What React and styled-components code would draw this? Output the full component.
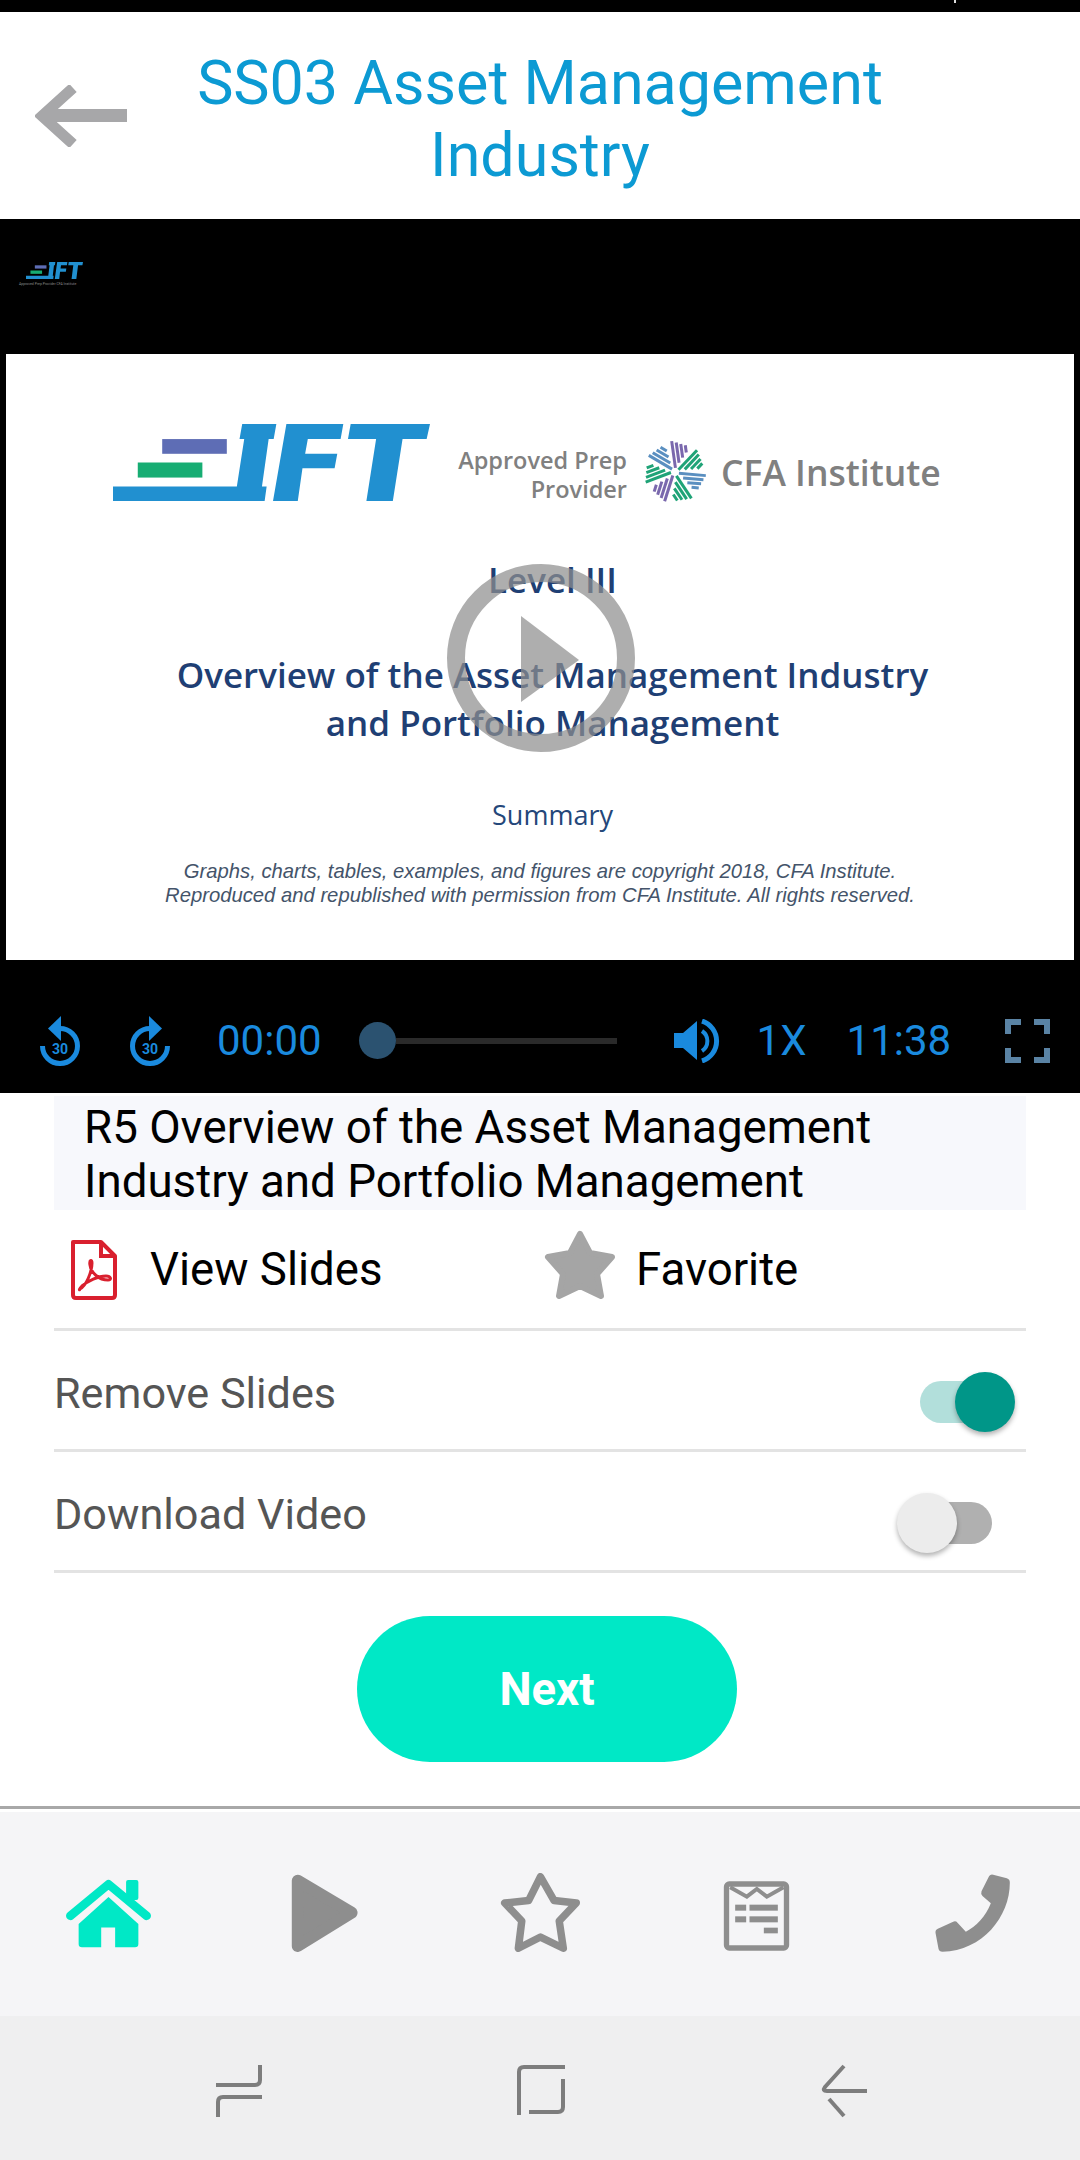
import React from 'react';
import styled, { createGlobalStyle } from 'styled-components';

const GlobalStyle = createGlobalStyle`
  html, body {
    margin: 0;
    padding: 0;
    background: #fff;
  }
  * {
    box-sizing: border-box;
  }
`;

const Screen = styled.div`
  width: 1080px;
  height: 2160px;
  overflow: hidden;
  display: flex;
  flex-direction: column;
  background: #fff;
  font-family: Roboto, "Liberation Sans", sans-serif;
`;

const StatusBar = styled.div`
  height: 12px;
  flex: none;
  background: #000;
  padding-left: 954px;
`;

const StatusTick = styled.div`
  width: 2px;
  height: 3px;
  background: #ddd;
`;

const Header = styled.header`
  height: 207px;
  flex: none;
  display: flex;
  align-items: center;
  padding-left: 35px;
`;

const HeaderTitle = styled.h1`
  margin: 6px 0 0 36px;
  width: 754px;
  font-size: 61px;
  font-weight: 400;
  line-height: 72px;
  text-align: center;
  color: #0c9ad3;
`;

const Video = styled.section`
  height: 874px;
  flex: none;
  background: #000;
  display: flex;
  flex-direction: column;
`;

const WatermarkLogo = styled.div`
  height: 135px;
  flex: none;
  padding: 43px 0 0 19px;
`;

const WatermarkMark = styled.div`
  padding-left: 7px;
  line-height: 0;
`;

const WatermarkText = styled.div`
  margin-top: 2px;
  font-size: 3.5px;
  line-height: 6px;
  color: #8a8a8a;
  white-space: nowrap;
`;

const Slide = styled.div`
  position: relative;
  height: 606px;
  flex: none;
  margin: 0 6px;
  background: #fff;
  display: flex;
  flex-direction: column;
  align-items: center;
`;

const LogoRow = styled.div`
  align-self: stretch;
  display: flex;
  align-items: flex-end;
  padding: 70px 0 0 107px;
`;

const PartnerGroup = styled.div`
  display: flex;
  align-items: center;
  margin-bottom: -4px;
`;

const ApprovedText = styled.div`
  width: 197px;
  padding-top: 5px;
  font-family: "Open Sans", sans-serif;
  font-size: 23.500px;
  font-weight: 600;
  line-height: 29px;
  text-align: right;
  color: #808080;
`;

const EmblemIcon = styled.svg`
  margin-left: 15px;
  flex: none;
`;

const CfaText = styled.div`
  margin-left: 13px;
  font-family: "Open Sans", sans-serif;
  font-size: 35.500px;
  font-weight: 600;
  line-height: 40px;
  color: #808080;
  white-space: nowrap;
`;

const SlideHeading = styled.div`
  margin-top: ${({ $top }) => $top}px;
  padding-left: 25px;
  font-family: "Open Sans", sans-serif;
  font-size: 35px;
  font-weight: 600;
  line-height: 48px;
  text-align: center;
  white-space: nowrap;
  color: #1f3f74;
`;

const SlideSummary = styled.div`
  margin-top: 51px;
  padding-left: 25px;
  font-family: "Open Sans", sans-serif;
  font-size: 27px;
  line-height: 34px;
  color: #24477a;
`;

const SlideNote = styled.div`
  margin-top: 27px;
  font-family: "Liberation Sans", Arial, sans-serif;
  font-size: 20.250px;
  font-style: italic;
  line-height: 24px;
  text-align: center;
  white-space: nowrap;
  color: #44546a;
`;

const PlayOverlay = styled.svg`
  position: absolute;
  left: 441px;
  top: 210px;
  width: 188px;
  height: 188px;
`;

const Controls = styled.div`
  height: 133px;
  flex: none;
  display: flex;
  align-items: center;
  padding: 28px 0 0 40px;
  color: #1a8ade;
`;

const ControlSlot = styled.div`
  flex: none;
  display: flex;
  align-items: center;
  margin-left: ${({ $left }) => $left || 0}px;
`;

const ControlText = styled.span`
  font-size: 42px;
  line-height: 48px;
  white-space: nowrap;
`;

const Seek = styled.div`
  width: 258px;
  display: flex;
  align-items: center;
`;

const SeekThumb = styled.div`
  width: 37px;
  height: 37px;
  flex: none;
  border-radius: 50%;
  background: #2b5270;
`;

const SeekTrack = styled.div`
  flex: 1;
  height: 6px;
  background: #2a2a2a;
`;

const Lesson = styled.main`
  flex: 1;
  display: flex;
  flex-direction: column;
  margin: 0 54px;
`;

const LessonTitle = styled.div`
  margin-top: 3px;
  height: 114px;
  flex: none;
  padding: 5px 0 0 30px;
  background: #f7f8fc;
  font-size: 45.700px;
  line-height: 54px;
  white-space: nowrap;
  color: #000;
`;

const ActionRow = styled.div`
  height: 121px;
  flex: none;
  display: flex;
  align-items: center;
  border-bottom: 3px solid #e3e3e3;
`;

const Action = styled.div`
  width: ${({ $width }) => $width}px;
  padding-left: ${({ $pad }) => $pad}px;
  display: flex;
  align-items: center;
  gap: ${({ $gap }) => $gap}px;
  font-size: 45.600px;
  line-height: 54px;
  padding-top: 2px;
  color: #000;
`;

const StarIcon = styled.svg`
  flex: none;
  margin-top: -10px;
`;

const SettingRow = styled.div`
  height: 121px;
  flex: none;
  display: flex;
  align-items: center;
  justify-content: space-between;
  border-bottom: 3px solid #e3e3e3;
`;

const SettingLabel = styled.span`
  margin-top: 7px;
  font-size: 43.200px;
  color: #555;
`;

const Toggle = styled.div`
  position: relative;
  width: 95px;
  height: 60px;
  margin: 24px ${({ $on }) => ($on ? 11 : 34)}px 0 0;
`;

const ToggleTrack = styled.div`
  position: absolute;
  top: 9px;
  bottom: 9px;
  ${({ $on }) => ($on ? 'left: 0; right: 20px;' : 'left: 20px; right: 0;')}
  border-radius: 21px;
  background: ${({ $on }) => ($on ? '#b2dfdb' : '#b0b0b0')};
`;

const ToggleThumb = styled.div`
  position: absolute;
  top: 0;
  ${({ $on }) => ($on ? 'right: 0;' : 'left: 0;')}
  width: 60px;
  height: 60px;
  border-radius: 50%;
  background: ${({ $on }) => ($on ? '#009688' : '#ececec')};
  box-shadow: 0 3px 5px rgba(0, 0, 0, 0.3);
`;

const NextButton = styled.button`
  align-self: flex-start;
  width: 380px;
  height: 146px;
  margin: 43px 0 0 303px;
  border: none;
  border-radius: 73px;
  background: #00e8c6;
  color: #fff;
  font-family: Roboto, sans-serif;
  font-size: 45.500px;
  font-weight: 700;
`;

const TabBar = styled.nav`
  height: 210px;
  flex: none;
  display: grid;
  grid-template-columns: repeat(5, 216px);
  align-items: center;
  justify-items: center;
  background: #f5f5f7;
  border-top: 3px solid #a8a8a8;
  box-shadow: inset 0 3px 0 #fff;
`;

const TabSlot = styled.div`
  display: flex;
  padding-top: ${({ $drop }) => $drop || 0}px;
`;

const SystemNav = styled.div`
  height: 144px;
  flex: none;
  display: flex;
  align-items: center;
  gap: 252px;
  padding: 6px 0 0 214px;
  background: #efeff0;
`;

const IftLogo = ({ width, height }) => (
  <svg width={width} height={height} viewBox="40 43 947 230" preserveAspectRatio="none">
    <rect x="187" y="88" width="193" height="44" fill="#5e6db5" />
    <rect x="114" y="158" width="193" height="45" fill="#17ad73" />
    <path
      fill="#2190d0"
      d="M40 230H410L432 88H418L426 43H528L520 88H505L485 230H499L493 273H40Z"
    />
    <path fill="#2190d0" d="M558 43H728L720 88H622L614 132H710L702 175H606L592 273H518Z" />
    <path fill="#2190d0" d="M750 43H987L977 88H905L876 273H797L826 88H742Z" />
  </svg>
);

const emblemColors = ['#7a68ad', '#1fa377', '#5a8fc0', '#1fa377', '#7a68ad', '#1fa377', '#5a8fc0'];

const CfaEmblem = () => (
  <EmblemIcon width="66" height="66" viewBox="-33 -33 66 66">
    {emblemColors.map((color, i) => (
      <g key={i} transform={`rotate(${(i * 360) / 7 - 8})`} stroke={color} strokeWidth="3">
        {[0, 1, 2, 3].map((k) => (
          <line key={k} x1={1 + k * 4.3} y1={-4 - k * 4.6} x2={1 + k * 4.3} y2={-31 + k * 2} />
        ))}
      </g>
    ))}
  </EmblemIcon>
);

const SkipIcon = ({ forward }) => (
  <svg width="40" height="50" viewBox="0 0 40 50">
    <g transform={forward ? 'translate(40 0) scale(-1 1)' : undefined}>
      <path
        d="M20 12.500A17.500 17.500 0 1 1 2.500 30"
        fill="none"
        stroke="currentColor"
        strokeWidth="5"
      />
      <path d="M21 0L8 12.500L21 25Z" fill="currentColor" />
    </g>
    <text
      x="20"
      y="38"
      textAnchor="middle"
      fontFamily="Roboto, sans-serif"
      fontWeight="700"
      fontSize="14"
      fill="currentColor"
    >
      30
    </text>
  </svg>
);

const VolumeIcon = () => (
  <svg width="46" height="44" viewBox="0 0 46 44">
    <path d="M0 14H9L23 2V41L9 29H0Z" fill="currentColor" />
    <path d="M28 12A12 12 0 0 1 28 32" fill="none" stroke="currentColor" strokeWidth="4" />
    <path d="M28 2A21 21 0 0 1 28 42" fill="none" stroke="currentColor" strokeWidth="5" />
  </svg>
);

const FullscreenIcon = () => (
  <svg width="45" height="44" viewBox="0 0 45 44" fill="none" stroke="#5a83a4" strokeWidth="6">
    <path d="M16 3H3V15" />
    <path d="M29 3H42V15" />
    <path d="M3 29V41H16" />
    <path d="M42 29V41H29" />
  </svg>
);

const PdfIcon = () => (
  <svg width="48" height="62" viewBox="0 0 48 62" fill="none" stroke="#d9202e">
    <path d="M3 3H31L45 17V56Q45 59 42 59H6Q3 59 3 56Z" strokeWidth="4" strokeLinejoin="round" />
    <path d="M31 3V17H45" strokeWidth="4" />
    <path
      d="M10 50C16 47 22 33 22 24C22 20 19 21 20 26C21 34 29 41 38 41C42 41 41 37 36 37C28 37 18 42 12 47C9 50 9 52 10 50Z"
      strokeWidth="3"
    />
  </svg>
);

const FavoriteStar = () => (
  <StarIcon width="72" height="70" viewBox="0 0 72 70">
    <path
      fill="#a5a5a5"
      stroke="#a5a5a5"
      strokeWidth="6"
      strokeLinejoin="round"
      d="M36 4L46 23L68 27L53 44L57 66L36 56L15 66L19 44L4 27L26 23Z"
    />
  </StarIcon>
);

const HomeTab = () => (
  <svg width="87" height="73" viewBox="45 45 260 220">
    <rect x="228" y="57" width="37" height="60" rx="6" fill="#00e8c6" />
    <path
      d="M60 165L175 70L290 165"
      fill="none"
      stroke="#00e8c6"
      strokeWidth="26"
      strokeLinecap="round"
      strokeLinejoin="round"
    />
    <path
      fill="#00e8c6"
      d="M85 190L175 108L265 190V250Q265 260 255 260H195V200H153V260H95Q85 260 85 250Z"
    />
  </svg>
);

const PlayTab = () => (
  <svg width="67" height="78" viewBox="722 40 202 236">
    <path
      fill="#8e8e8e"
      stroke="#8e8e8e"
      strokeWidth="36"
      strokeLinejoin="round"
      d="M742 60L905 157L742 258Z"
    />
  </svg>
);

const StarTab = () => (
  <svg width="81" height="79" viewBox="29 44 232 232">
    <path
      fill="none"
      stroke="#8e8e8e"
      strokeWidth="22"
      strokeLinejoin="round"
      d="M145 55L185 125L250 132L200 185L212 265L145 232L80 265L90 185L40 132L110 125Z"
    />
  </svg>
);

const NewsTab = () => (
  <svg width="67" height="70" viewBox="675 61 198 210">
    <rect x="684" y="70" width="180" height="192" rx="8" fill="none" stroke="#8e8e8e" strokeWidth="16" />
    <path d="M695 80L745 108L775 85L805 108L855 80" fill="none" stroke="#8e8e8e" strokeWidth="12" />
    <g fill="#8e8e8e">
      <rect x="710" y="132" width="33" height="18" />
      <rect x="753" y="132" width="85" height="18" />
      <rect x="710" y="167" width="33" height="18" />
      <rect x="753" y="167" width="85" height="18" />
      <rect x="796" y="201" width="42" height="17" />
    </g>
  </svg>
);

const PhoneTab = () => (
  <svg width="77" height="78" viewBox="1285 42 230 234">
    <path
      fill="#8e8e8e"
      d="M1450 48Q1454 42 1462 44L1503 55Q1512 58 1512 68C1512 170 1430 272 1310 275Q1300 275 1298 266L1289 218Q1288 209 1296 206L1342 185Q1350 182 1355 188L1380 215C1410 200 1440 170 1455 130L1430 108Q1424 102 1427 94Z"
    />
  </svg>
);

const navStroke = { fill: 'none', stroke: '#7d7d7d', strokeWidth: 4 };

const RecentNav = () => (
  <svg width="50" height="56" viewBox="214 2063 50 56" {...navStroke}>
    <path d="M260 2065V2080Q260 2085 255 2085H216" />
    <path d="M262 2097H223Q218 2097 218 2102V2117" />
  </svg>
);

const HomeNav = () => (
  <svg width="50" height="56" viewBox="516 2063 50 56" {...navStroke}>
    <path d="M565 2067H524Q519 2067 519 2072V2115" />
    <path d="M563 2079V2107Q563 2112 558 2112H529" />
  </svg>
);

const BackNav = () => (
  <svg width="50" height="56" viewBox="818 2063 50 56" {...navStroke}>
    <path d="M844 2066L825 2087Q822 2091 827 2091H867" />
    <path d="M829 2099L844 2116" />
  </svg>
);

const App = () => (
  <Screen>
    <GlobalStyle />
    <StatusBar>
      <StatusTick />
    </StatusBar>

    <Header>
      <svg width="92" height="62" viewBox="0 0 92 62" fill="none" stroke="#a7a7a9" strokeWidth="11">
        <path d="M38 3L7 31L38 59" />
        <path d="M8 30.500H92" strokeWidth="13" />
      </svg>
      <HeaderTitle>SS03 Asset Management Industry</HeaderTitle>
    </Header>

    <Video>
      <WatermarkLogo>
        <WatermarkMark>
          <IftLogo width={57} height={17} />
        </WatermarkMark>
        <WatermarkText>Approved Prep Provider CFA Institute</WatermarkText>
      </WatermarkLogo>

      <Slide>
        <LogoRow>
          <IftLogo width={317} height={77} />
          <PartnerGroup>
            <ApprovedText>
              Approved Prep
              <br />
              Provider
            </ApprovedText>
            <CfaEmblem />
            <CfaText>CFA Institute</CfaText>
          </PartnerGroup>
        </LogoRow>
        <SlideHeading $top={55}>Level III</SlideHeading>
        <SlideHeading $top={47}>
          Overview of the Asset Management Industry
          <br />
          and Portfolio Management
        </SlideHeading>
        <SlideSummary>Summary</SlideSummary>
        <SlideNote>
          Graphs, charts, tables, examples, and figures are copyright 2018, CFA Institute.
          <br />
          Reproduced and republished with permission from CFA Institute. All rights reserved.
        </SlideNote>
        <PlayOverlay viewBox="0 0 188 188">
          <circle
            cx="94"
            cy="94"
            r="85"
            fill="none"
            stroke="#8f8f8f"
            strokeOpacity="0.72"
            strokeWidth="18"
          />
          <path d="M74 52L132 96L74 138Z" fill="#8f8f8f" fillOpacity="0.72" />
        </PlayOverlay>
      </Slide>

      <Controls>
        <ControlSlot>
          <SkipIcon />
        </ControlSlot>
        <ControlSlot $left={50}>
          <SkipIcon forward />
        </ControlSlot>
        <ControlSlot $left={47}>
          <ControlText>00:00</ControlText>
        </ControlSlot>
        <ControlSlot $left={37}>
          <Seek>
            <SeekThumb />
            <SeekTrack />
          </Seek>
        </ControlSlot>
        <ControlSlot $left={57}>
          <VolumeIcon />
        </ControlSlot>
        <ControlSlot $left={37}>
          <ControlText>1X</ControlText>
        </ControlSlot>
        <ControlSlot $left={40}>
          <ControlText>11:38</ControlText>
        </ControlSlot>
        <ControlSlot $left={54}>
          <FullscreenIcon />
        </ControlSlot>
      </Controls>
    </Video>

    <Lesson>
      <LessonTitle>
        R5 Overview of the Asset Management
        <br />
        Industry and Portfolio Management
      </LessonTitle>
      <ActionRow>
        <Action $width={490} $pad={16} $gap={32}>
          <PdfIcon />
          View Slides
        </Action>
        <Action $width={480} $pad={0} $gap={20}>
          <FavoriteStar />
          Favorite
        </Action>
      </ActionRow>
      <SettingRow>
        <SettingLabel>Remove Slides</SettingLabel>
        <Toggle $on>
          <ToggleTrack $on />
          <ToggleThumb $on />
        </Toggle>
      </SettingRow>
      <SettingRow>
        <SettingLabel>Download Video</SettingLabel>
        <Toggle>
          <ToggleTrack />
          <ToggleThumb />
        </Toggle>
      </SettingRow>
      <NextButton>Next</NextButton>
    </Lesson>

    <TabBar>
      <TabSlot>
        <HomeTab />
      </TabSlot>
      <TabSlot>
        <PlayTab />
      </TabSlot>
      <TabSlot>
        <StarTab />
      </TabSlot>
      <TabSlot $drop={6}>
        <NewsTab />
      </TabSlot>
      <TabSlot>
        <PhoneTab />
      </TabSlot>
    </TabBar>

    <SystemNav>
      <RecentNav />
      <HomeNav />
      <BackNav />
    </SystemNav>
  </Screen>
);

export default App;
